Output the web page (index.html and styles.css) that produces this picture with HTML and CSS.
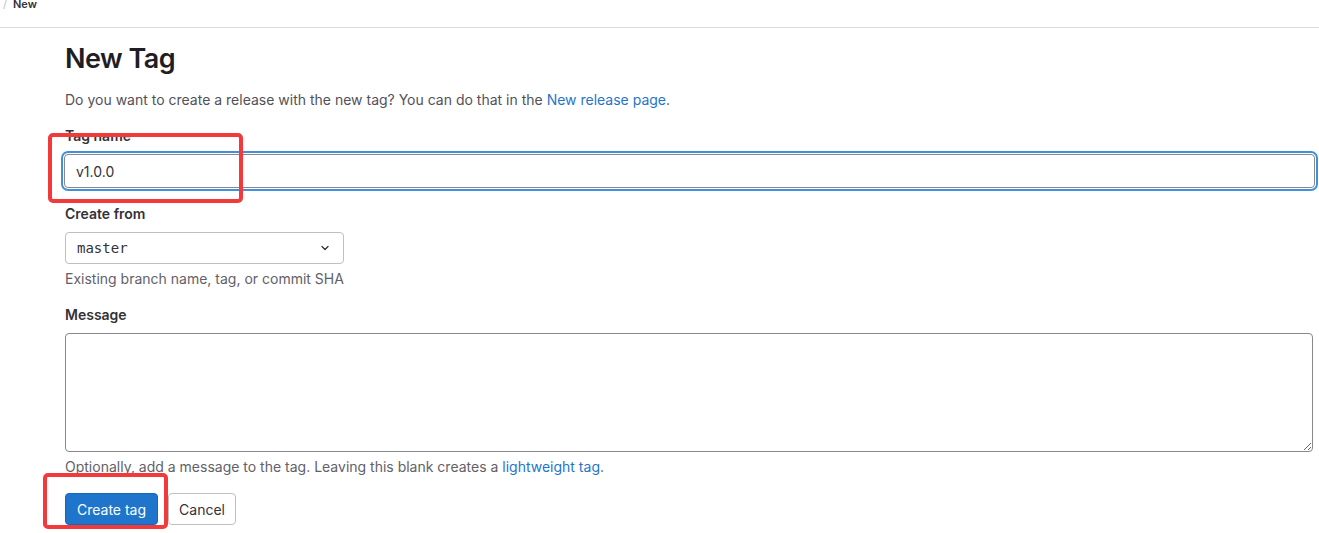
FILE: index.html
```html
<!DOCTYPE html>
<html lang="en">
   <head>
      <meta charset="UTF-8">
      <meta name="viewport" content="width=device-width, initial-scale=1.0">
      <title>New Tag</title>
      <link rel="stylesheet" href="styles.css">
   </head>
   <body>
      <nav class="breadcrumbs">
         <span class="crumb-sep">/</span>
         <span class="crumb-current">New</span>
      </nav>
      <main class="content">
         <h1 class="page-title">New Tag</h1>
         <p class="lead">Do you want to create a release with the new tag? You can do that in the <a href="#">New release page</a>.</p>
         <form class="tag-form">
            <div class="form-group">
               <label for="tag-name">Tag name</label>
               <input type="text" id="tag-name" class="form-control focused" value="v1.0.0">
               <span class="mark mark-tag"></span>
            </div>
            <div class="form-group">
               <label>Create from</label>
               <div class="ref-select">
                  <span class="ref-text">master</span>
                  <svg class="chevron" width="16" height="16" viewBox="0 0 16 16"><path d="M5 6.5l3 3 3-3" fill="none" stroke="#333238" stroke-width="1.3" stroke-linecap="round" stroke-linejoin="round"/></svg>
               </div>
               <p class="help">Existing branch name, tag, or commit SHA</p>
            </div>
            <div class="form-group">
               <label for="message">Message</label>
               <textarea id="message" class="form-control message"></textarea>
               <p class="help">Optionally, add a message to the tag. Leaving this blank creates a <a href="#">lightweight tag</a>.</p>
            </div>
            <div class="actions">
               <button type="button" class="btn btn-confirm">Create tag</button>
               <button type="button" class="btn btn-default">Cancel</button>
               <span class="mark mark-btn"></span>
            </div>
         </form>
      </main>
   </body>
</html>
```

FILE: styles.css
```css
* {
margin: 0;
padding: 0;
box-sizing: border-box;
}
body {
background: #fff;
color: #333238;
font-family: Inter, "Noto Sans", sans-serif;
font-size: 14px;
min-height: 100vh;
}
a {
color: #1f75cb;
text-decoration: none;
}
.breadcrumbs {
height: 28px;
border-bottom: 1px solid #dcdcde;
padding-left: 3px;
font-size: 11px;
line-height: 9px;
display: flex;
align-items: flex-start;
gap: 6px;
overflow: hidden;
}
.crumb-sep {
color: #bfbfc3;
}
.crumb-current {
font-weight: 600;
color: #333238;
}
.content {
padding: 15px 5px 0 65px;
}
.page-title {
font-size: 27px;
font-weight: 600;
line-height: 32px;
color: #1f1e24;
letter-spacing: -0.5px;
}
.lead {
margin-top: 15px;
line-height: 20px;
color: #535158;
}
.tag-form {
margin-top: 16px;
}
.form-group {
position: relative;
margin-bottom: 16px;
}
label {
display: block;
font-weight: 600;
line-height: 20px;
margin-bottom: 8px;
color: #333238;
}
.form-control {
display: block;
width: 100%;
height: 32px;
padding: 0 11px;
border: 1px solid #89888d;
border-radius: 4px;
font-family: inherit;
font-size: 14px;
color: #333238;
background: #fff;
}
.form-control.focused {
margin-left: -1px;
width: calc(100% + 2px);
height: 34px;
box-shadow: 0 0 0 1px #fff, 0 0 0 3px #428fdc;
outline: none;
}
.ref-select {
width: 279px;
height: 32px;
border: 1px solid #bfbfc3;
border-radius: 4px;
display: flex;
align-items: center;
justify-content: space-between;
padding: 0 10px 0 11px;
}
.ref-text {
font-family: "DejaVu Sans Mono", monospace;
font-size: 14px;
color: #333238;
}
.help {
margin-top: 5px;
line-height: 20px;
color: #626168;
}
.message {
height: 119px;
resize: vertical;
width: calc(100% - 1px);
}
.actions {
position: relative;
display: flex;
gap: 10px;
margin-top: 4px;
}
.btn {
height: 32px;
padding: 0 11px;
border-radius: 4px;
font-family: inherit;
font-size: 14px;
white-space: nowrap;
cursor: pointer;
}
.btn-confirm {
background: #1f75cb;
color: #fff;
border: 1px solid #1068bf;
}
.btn-default {
background: #fff;
color: #333238;
border: 1px solid #bfbfc3;
padding: 0 10px;
}
/* red highlight frames over the fields */
.mark {
position: absolute;
border: 4px solid #f33a3a;
border-radius: 5px;
pointer-events: none;
}
.mark-tag {
left: -17px;
top: 7px;
width: 195px;
height: 70px;
}
.mark-btn {
left: -22px;
top: -20px;
width: 125px;
height: 56px;
}
```
